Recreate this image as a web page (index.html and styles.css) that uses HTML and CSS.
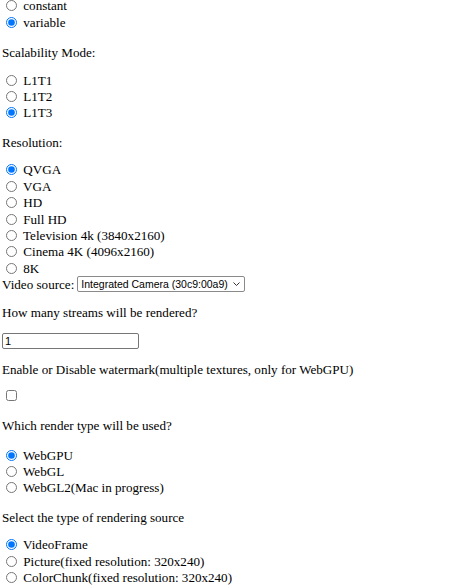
FILE: index.html
```html
<!DOCTYPE html>
<html>
<head>
<meta charset="utf-8">
<link rel="stylesheet" href="styles.css">
</head>
<body>
<div class="page">
<div class="group">
<label class="opt"><input type="radio" name="br"> constant</label>
<label class="opt"><input type="radio" name="br" checked> variable</label>
</div>
<p class="q">Scalability Mode:</p>
<div class="group">
<label class="opt"><input type="radio" name="sm"> L1T1</label>
<label class="opt"><input type="radio" name="sm"> L1T2</label>
<label class="opt"><input type="radio" name="sm" checked> L1T3</label>
</div>
<p class="q">Resolution:</p>
<div class="group">
<label class="opt"><input type="radio" name="res" checked> QVGA</label>
<label class="opt"><input type="radio" name="res"> VGA</label>
<label class="opt"><input type="radio" name="res"> HD</label>
<label class="opt"><input type="radio" name="res"> Full HD</label>
<label class="opt"><input type="radio" name="res"> Television 4k (3840x2160)</label>
<label class="opt"><input type="radio" name="res"> Cinema 4K (4096x2160)</label>
<label class="opt"><input type="radio" name="res"> 8K</label>
</div>
<div class="source"><span class="src-label">Video source:</span><select class="sel"><option>Integrated Camera (30c9:00a9)</option></select></div>
<p class="q">How many streams will be rendered?</p>
<input class="txt" type="text" value="1">
<p class="q">Enable or Disable watermark(multiple textures, only for WebGPU)</p>
<input class="chk" type="checkbox">
<p class="q">Which render type will be used?</p>
<div class="group">
<label class="opt"><input type="radio" name="rt" checked> WebGPU</label>
<label class="opt"><input type="radio" name="rt"> WebGL</label>
<label class="opt"><input type="radio" name="rt"> WebGL2(Mac in progress)</label>
</div>
<p class="q">Select the type of rendering source</p>
<div class="group">
<label class="opt"><input type="radio" name="src" checked> VideoFrame</label>
<label class="opt"><input type="radio" name="src"> Picture(fixed resolution: 320x240)</label>
<label class="opt"><input type="radio" name="src"> ColorChunk(fixed resolution: 320x240)</label>
</div>
</div>
</body>
</html>
```

FILE: styles.css
```css
html, body { margin: 0; padding: 0; background: #fff; }
.page {
  font-family: "Liberation Serif", "Times New Roman", serif;
  font-size: 13.1px;
  line-height: 15px;
  color: #000;
  padding: 0 0 0 2px;
  margin-top: -2px;
}
.group { display: block; }
.group:first-child .opt { height: 17px; }
.opt { display: block; height: 16.4px; }
.opt input[type="radio"] {
  width: 11px;
  height: 11px;
  margin: 2px 3px 0 4px;
  vertical-align: -1px;
}
.q { margin: 12.8px 0; }
.source { display: flex; align-items: center; height: 16.4px; margin-top: -1px; }
.src-label { margin-right: 3px; }
.sel {
  -webkit-appearance: none;
  appearance: none;
  box-sizing: border-box;
  font-family: "Liberation Sans", Arial, sans-serif;
  font-size: 10.5px;
  width: 168px;
  height: 16px;
  line-height: 14px;
  padding: 0 0 0 3px;
  margin: 0;
  border: 1px solid #8a8a8a;
  border-radius: 2px;
  color: #000;
  background: #fff url("data:image/svg+xml,%3Csvg xmlns='http://www.w3.org/2000/svg' width='7' height='4' viewBox='0 0 7 4'%3E%3Cpolyline points='0.5,0.5 3.5,3.5 6.5,0.5' fill='none' stroke='%23333' stroke-width='1'/%3E%3C/svg%3E") no-repeat right 4px center;
}
.txt {
  display: block;
  box-sizing: border-box;
  width: 137px;
  height: 16px;
  padding: 0 2px;
  margin: 0;
  font-family: "Liberation Sans", Arial, sans-serif;
  font-size: 11px;
  border: 1px solid #767676;
  border-radius: 2px;
}
.chk {
  display: block;
  width: 11px;
  height: 11px;
  margin: 4px 0 17px 4px;
}
.chk + .q + .group { margin-top: 15px; }
```
